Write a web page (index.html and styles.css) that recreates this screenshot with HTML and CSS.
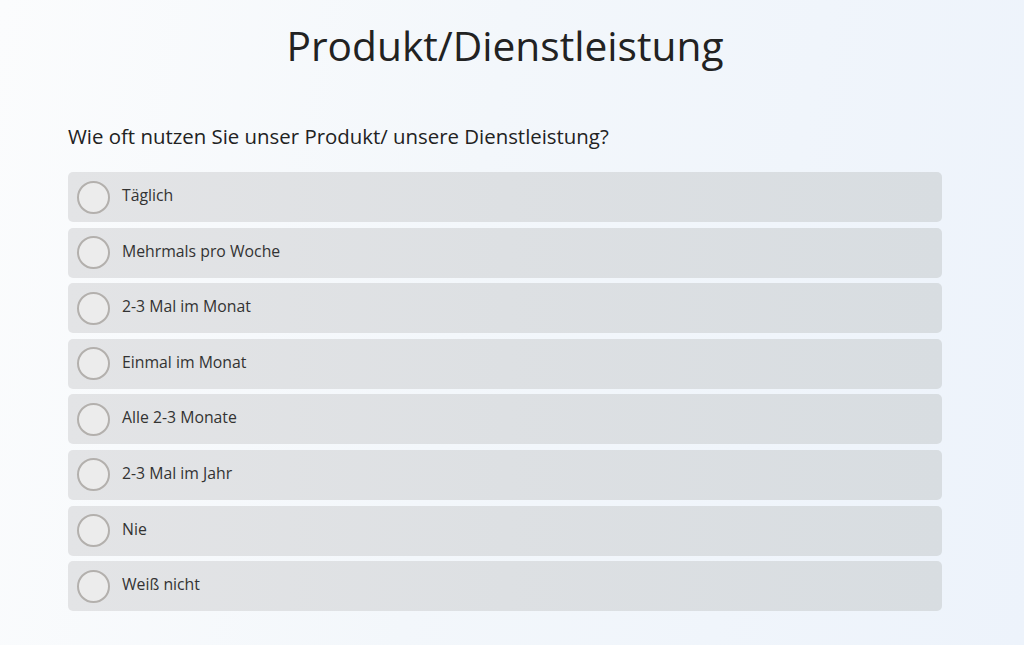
FILE: index.html
```html
<!DOCTYPE html>
<html lang="de">
<head>
<meta charset="utf-8">
<title>Produkt/Dienstleistung</title>
<link rel="stylesheet" href="styles.css">
</head>
<body>
<main class="survey">
  <h1 class="title">Produkt/Dienstleistung</h1>
  <p class="question">Wie oft nutzen Sie unser Produkt/ unsere Dienstleistung?</p>
  <ul class="options">
    <li class="option"><span class="radio"></span><span class="label">Täglich</span></li>
    <li class="option"><span class="radio"></span><span class="label">Mehrmals pro Woche</span></li>
    <li class="option"><span class="radio"></span><span class="label">2-3 Mal im Monat</span></li>
    <li class="option"><span class="radio"></span><span class="label">Einmal im Monat</span></li>
    <li class="option"><span class="radio"></span><span class="label">Alle 2-3 Monate</span></li>
    <li class="option"><span class="radio"></span><span class="label">2-3 Mal im Jahr</span></li>
    <li class="option"><span class="radio"></span><span class="label">Nie</span></li>
    <li class="option"><span class="radio"></span><span class="label">Weiß nicht</span></li>
  </ul>
</main>
</body>
</html>
```
FILE: styles.css
```css
html, body {
  margin: 0;
  padding: 0;
}
body {
  width: 1024px;
  height: 645px;
  overflow: hidden;
  font-family: "Open Sans", "Liberation Sans", sans-serif;
  color: #222;
  background: linear-gradient(100deg, #fbfcfd 0%, #f3f7fb 45%, #edf3fb 100%);
}
.survey {
  padding: 0 82px 0 68px;
}
.title {
  margin: 0;
  padding-top: 19px;
  text-align: center;
  font-weight: 400;
  font-size: 40.7px;
  line-height: 52px;
  color: #222;
}
.question {
  margin: 0;
  padding-top: 52px;
  font-size: 20.4px;
  line-height: 26px;
  color: #222;
}
.options {
  list-style: none;
  margin: 23px 0 0 0;
  padding: 0;
  display: flex;
  flex-direction: column;
  gap: 5.6px;
}
.option {
  height: 50px;
  border-radius: 5px;
  background: linear-gradient(90deg, #e3e4e6 0%, #dde0e3 50%, #d8dde1 100%);
  display: flex;
  align-items: center;
  padding-left: 9px;
  gap: 12px;
}
.radio {
  width: 29px;
  height: 29px;
  border: 2px solid #b3b0ad;
  border-radius: 50%;
  background: #ececec;
  flex: none;
}
.label {
  font-size: 15.8px;
  color: #333;
  margin-bottom: 4px;
}
```
